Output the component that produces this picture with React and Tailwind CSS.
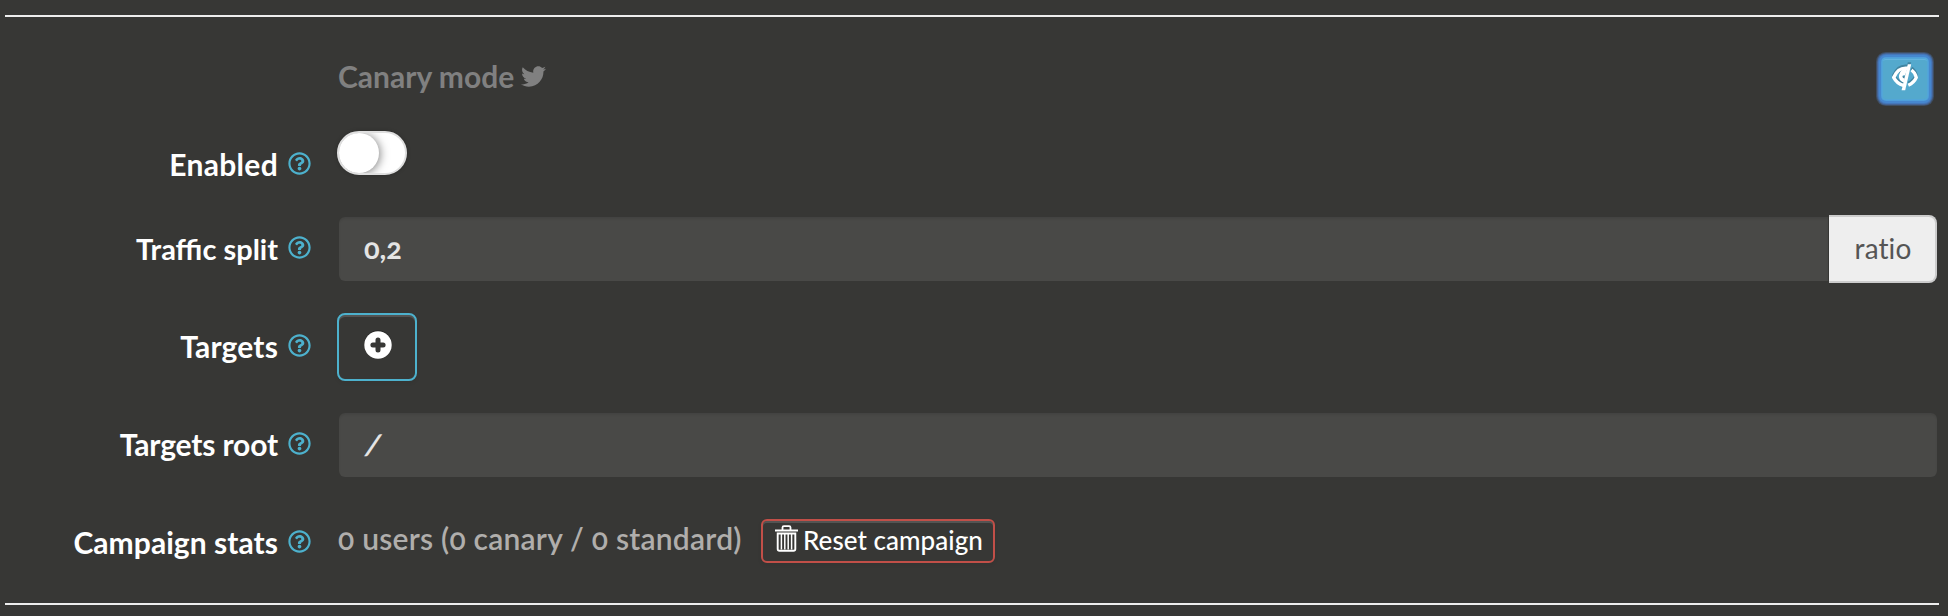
import { FaRegQuestionCircle, FaTwitter } from "react-icons/fa";

function EyeClosed() {
  return (
    <svg viewBox="0 0 26 27" className="h-[27px] w-[26px] drop-shadow-[0_-2px_0_rgba(0,0,0,0.22)]" fill="none" stroke="#fff">
      <path d="M15.800 0.300h3.400L13.200 26.300H9.600z" fill="#fff" stroke="none" />
      <path d="M16 4.300C9 3.300 4.200 7.500 1.700 13.500c2.200 4.200 5 6.700 9.600 7.900" strokeWidth="3.400" />
      <path d="M15.500 4 13 11.500c-1.500-.8-2.900.2-2.400 1.600.4 1.200 1.200 1.500 2.200 1.400l-1 4C8 17.400 6.400 14 7.100 10.800 7.800 8 10 6 12 4.600z" fill="#fff" stroke="none" />
      <path d="M19.500 6c2.500 1.800 4 4.200 4.800 7.500-1.500 3.400-4 6-8 7.800" strokeWidth="3.200" />
    </svg>
  );
}

function PlusDisc() {
  return (
    <svg viewBox="0 0 28 28" className="h-7 w-7 drop-shadow-[0_-1px_0_rgba(0,0,0,0.3)]">
      <circle cx="14" cy="14" r="13.7" fill="#fff" />
      <path d="M14 8.900v10.200M8.900 14h10.200" stroke="#373735" strokeWidth="5" strokeLinecap="round" />
    </svg>
  );
}

function Trash() {
  return (
    <svg viewBox="0 0 23 27" className="h-[27px] w-[23px]" fill="none" stroke="#fff">
      <path d="M0 5.500h23" strokeWidth="2" />
      <path d="M7.500 5V2.600q0-1.400 1.400-1.400h5.200q1.400 0 1.400 1.400V5" strokeWidth="1.800" />
      <path d="M2.700 8.500h17.600V24q0 1.800-1.800 1.800h-14Q2.700 25.800 2.700 24z" strokeWidth="1.900" />
      <path d="M6.400 9v15.500M9.800 9v15.500M13.200 9v15.500M16.600 9v15.500" strokeWidth="1.500" />
    </svg>
  );
}

function Row({ label, text = "text-[30px]", labelClass = "", children }) {
  return (
    <div className="flex h-[68px] items-center">
      <div className={`flex w-[332px] shrink-0 items-center justify-end gap-[10px] ${labelClass}`}>
        <span className={`-mt-[2px] leading-[34px] font-bold text-white ${text}`}>{label}</span>
        <FaRegQuestionCircle className="mr-[26px] -mt-[3px] size-[23px] text-[#4db1cd]" />
      </div>
      {children}
    </div>
  );
}

export default function App() {
  return (
    <div className="h-[616px] w-[1948px] overflow-hidden bg-[#373735] pt-[15px] pr-[9px] pl-[5px] font-['Lato',sans-serif] whitespace-nowrap oldstyle-nums">
      <div className="h-[2px] bg-[#eeeeee]" />
      <div className="flex h-[100px] items-start pt-[41px] pr-[11px]">
        <div className="flex items-center pl-[333px] text-[#808080]">
          <span className="text-[30px] leading-[36px] font-bold">Canary mode</span>
          <FaTwitter className="ml-[7px] size-[25px]" />
        </div>
        <button className="ml-auto flex h-[42px] w-[46px] items-start justify-center rounded-[4px] bg-[#54a9cd] pt-[6px] shadow-[0_0_0_1px_#4f9fda,0_0_0_3px_#4687cf,0_0_0_4px_#4577bb,0_0_0_5px_#456494,0_0_0_6px_#3f4e62,inset_0_0_0_1px_#52a6d8,inset_0_2px_0_#63b4e0]">
          <EyeClosed />
        </button>
      </div>
      <div className="flex flex-col gap-[30px]">
        <Row label="Enabled" text="text-[30px] tracking-[0.3px]" labelClass="pt-[27px]">
          <div className="mb-[-4px] flex h-11 w-[70px] overflow-hidden rounded-full border-2 border-[#dfdfdf] bg-white shadow-[0_0_4px_rgba(0,0,0,0.2)]">
            <div className="size-10 rounded-full bg-white shadow-[1px_1px_10px_rgba(0,0,0,0.5)]" />
          </div>
        </Row>
        <Row label="Traffic split" text="text-[29px] pt-px">
          <div className="ml-[2px] flex h-16 w-[1489px] items-center rounded-l-[6px] bg-[#494947] pb-[2px] pl-[25px] text-[29px] font-bold tracking-[-0.1px] text-[#e4e4e4] shadow-[inset_0_2px_2px_rgba(0,0,0,0.08)]">
            0,2
          </div>
          <div className="ml-[1px] flex h-[68px] w-[108px] items-center justify-center rounded-r-[8px] border-2 border-l-0 border-[#cccccc] bg-[#eeeeee] pb-[2px] pl-[2px] text-[28px] tracking-[0.1px] text-[#555]">
            ratio
          </div>
        </Row>
        <Row label="Targets" text="text-[30px] tracking-[0.15px]">
          <button className="flex h-[68px] w-20 items-start justify-center rounded-[8px] border-2 border-[#4db1cd] pt-[16px] pl-[1px] shadow-[inset_0_2px_0_rgba(255,255,255,0.15),0_2px_4px_rgba(0,0,0,0.06)]">
            <PlusDisc />
          </button>
        </Row>
        <Row label="Targets root" text="text-[30px] tracking-[-0.15px]">
          <div className="ml-[2px] flex h-16 w-[1598px] items-center rounded-[6px] bg-[#494947] pb-[2px] pl-[28px] text-[28px] font-black text-[#e4e4e4] shadow-[inset_0_2px_2px_rgba(0,0,0,0.08)]">
            <span className="inline-block -skew-x-[16deg]">/</span>
          </div>
        </Row>
        <Row label="Campaign stats" text="text-[30px] tracking-[0.05px]">
          <span className="-mt-[10px] ml-px w-[423px] text-[30px] leading-[34px] font-semibold tracking-[0.24px] text-[#b0aeac]">
            0 users (0 canary / 0 standard)
          </span>
          <button className="-mt-[4px] flex h-11 w-[234px] items-center rounded-[6px] border-2 border-[#c14f48] pl-[12px] text-[26px] leading-[30px] font-medium tracking-[0.05px] text-white shadow-[inset_0_2px_0_rgba(255,255,255,0.15),0_2px_4px_rgba(0,0,0,0.06)]">
            <span className="-mt-[5px]">
              <Trash />
            </span>
            <span className="-mt-[3px] ml-[5px]">Reset campaign</span>
          </button>
        </Row>
      </div>
      <div className="mt-[26px] h-[2px] bg-[#eeeeee]" />
    </div>
  );
}
